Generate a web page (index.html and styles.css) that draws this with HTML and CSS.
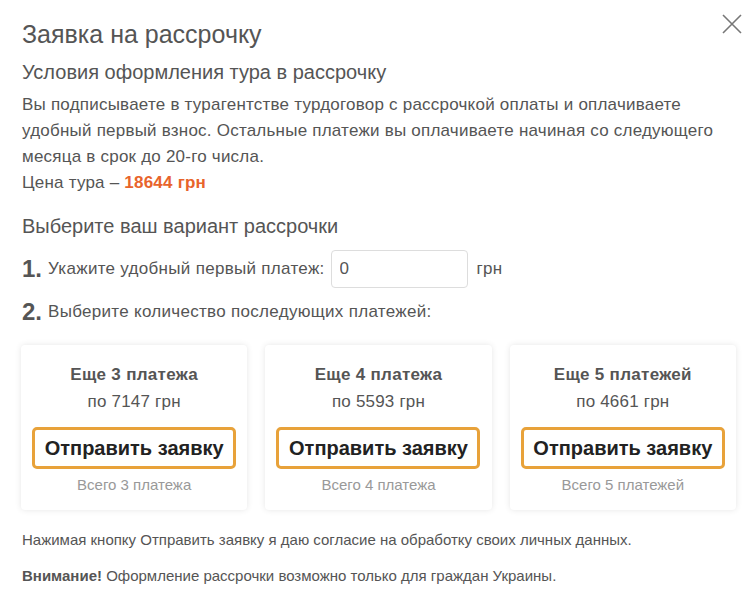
FILE: index.html
```html
<!DOCTYPE html>
<html lang="ru">
<head>
<meta charset="utf-8">
<link rel="stylesheet" href="styles.css">
</head>
<body>
<div class="modal">
  <button class="close" aria-label="close">
    <svg width="20" height="20" viewBox="0 0 20 20"><path d="M1 1L19 19M19 1L1 19" stroke="#777" stroke-width="1.6" fill="none"/></svg>
  </button>
  <h1 class="title">Заявка на рассрочку</h1>
  <h2 class="subtitle">Условия оформления тура в рассрочку</h2>
  <p class="text">Вы подписываете в турагентстве турдоговор с рассрочкой оплаты и оплачиваете удобный первый взнос. Остальные платежи вы оплачиваете начиная со следующего месяца в срок до 20-го числа.<br>Цена тура – <b class="price">18644 грн</b></p>
  <h2 class="subtitle choose">Выберите ваш вариант рассрочки</h2>
  <div class="step step1"><span class="num">1.</span> Укажите удобный первый платеж: <input class="inp" type="text" value="0"> <span class="cur">грн</span></div>
  <div class="step step2"><span class="num">2.</span> Выберите количество последующих платежей:</div>
  <div class="cards">
    <div class="card">
      <div class="c-title">Еще 3 платежа</div>
      <div class="c-sum">по 7147 грн</div>
      <button class="btn">Отправить заявку</button>
      <div class="c-total">Всего 3 платежа</div>
    </div>
    <div class="card">
      <div class="c-title">Еще 4 платежа</div>
      <div class="c-sum">по 5593 грн</div>
      <button class="btn">Отправить заявку</button>
      <div class="c-total">Всего 4 платежа</div>
    </div>
    <div class="card">
      <div class="c-title">Еще 5 платежей</div>
      <div class="c-sum">по 4661 грн</div>
      <button class="btn">Отправить заявку</button>
      <div class="c-total">Всего 5 платежей</div>
    </div>
  </div>
  <p class="note">Нажимая кнопку Отправить заявку я даю согласие на обработку своих личных данных.</p>
  <p class="note warn"><b>Внимание!</b> Оформление рассрочки возможно только для граждан Украины.</p>
</div>
</body>
</html>
```

FILE: styles.css
```css
* { box-sizing: border-box; }
html, body { margin: 0; padding: 0; background: #fff; }
body { font-family: "Liberation Sans", Arial, sans-serif; color: #555; }
.modal { position: relative; padding: 20px 18px 0 22px; width: 756px; height: 597px; }
.close { position: absolute; top: 14px; right: 14px; width: 20px; height: 20px; padding: 0; border: 0; background: none; }
.close svg { display: block; }
.title { margin: 0; font-size: 25px; font-weight: normal; line-height: 28px; color: #555; }
.subtitle { margin: 12px 0 0; font-size: 20px; font-weight: normal; line-height: 24px; color: #555; }
.text { margin: 8px 0 0; font-size: 17px; letter-spacing: 0.22px; line-height: 26px; color: #555; }
.price { color: #e8642c; }
.choose { margin-top: 18px; }
.step { display: flex; align-items: center; font-size: 17px; letter-spacing: 0.3px; color: #555; }
.step1 { margin-top: 12px; height: 38px; }
.step2 { margin-top: 12px; height: 24px; }
.num { font-size: 24px; font-weight: bold; margin-right: 6px; color: #555; letter-spacing: 0; }
.inp { width: 137px; height: 38px; margin: 0 9px 0 6px; border: 1px solid #ddd; border-radius: 4px; padding: 0 8px; font-family: inherit; font-size: 17px; color: #555; }
.cards { display: grid; grid-template-columns: repeat(3, 1fr); gap: 18px; margin-top: 21px; width: 715px; margin-left: -1px; }
.card { height: 165px; border-radius: 4px; box-shadow: 0 0 6px rgba(0,0,0,0.10); display: flex; flex-direction: column; align-items: center; padding-top: 20px; }
.c-title { font-size: 17px; letter-spacing: 0.3px; font-weight: bold; color: #555; line-height: 20px; }
.c-sum { font-size: 17px; letter-spacing: 0.2px; color: #555; margin-top: 7px; line-height: 20px; }
.btn { margin-top: 15px; width: 204px; height: 42px; border: 3px solid #e8a23a; border-radius: 5px; background: #fff; font-family: inherit; font-size: 20px; font-weight: bold; color: #222; padding: 0; }
.c-total { margin-top: 7px; font-size: 15px; color: #999; line-height: 18px; }
.note { margin: 21px 0 0; font-size: 15px; line-height: 18px; color: #555; }
.warn { margin-top: 18px; }
.warn b { color: #555; }
```
